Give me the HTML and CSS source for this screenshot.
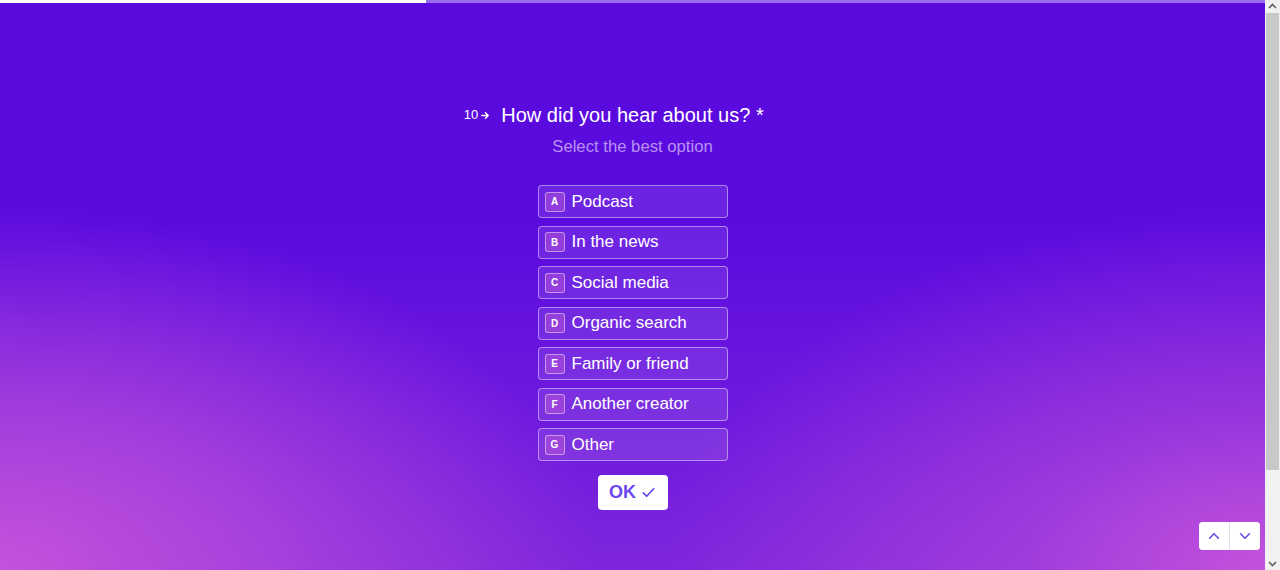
FILE: index.html
```html
<!DOCTYPE html>
<html lang="en">
<head>
<meta charset="utf-8">
<title>How did you hear about us?</title>
<link rel="stylesheet" href="styles.css">
</head>
<body>
<div class="page">
  <main class="stage">
    <div class="progress"><div class="progress-fill" style="width:426px"></div></div>
    <section class="question">
      <h1 class="title">
        <span class="qnum">10<svg class="qarrow" viewBox="0 0 10 10" width="9" height="9"><path d="M1 5h7M5 2l3 3-3 3" fill="none" stroke="#fff" stroke-width="1.6" stroke-linecap="round" stroke-linejoin="round"/></svg></span>
        How did you hear about us? *
      </h1>
      <p class="subtitle">Select the best option</p>
      <ul class="choices">
        <li class="choice"><span class="key">A</span><span class="label">Podcast</span></li>
        <li class="choice"><span class="key">B</span><span class="label">In the news</span></li>
        <li class="choice"><span class="key">C</span><span class="label">Social media</span></li>
        <li class="choice"><span class="key">D</span><span class="label">Organic search</span></li>
        <li class="choice"><span class="key">E</span><span class="label">Family or friend</span></li>
        <li class="choice"><span class="key">F</span><span class="label">Another creator</span></li>
        <li class="choice"><span class="key">G</span><span class="label">Other</span></li>
      </ul>
      <button class="ok">OK<svg viewBox="0 0 16 16" width="15" height="15"><path d="M2.5 8.5l3.5 3.5 7.5-8" fill="none" stroke="#6b47ee" stroke-width="1.8" stroke-linecap="round" stroke-linejoin="round"/></svg></button>
    </section>
    <nav class="pager">
      <button class="pbtn"><svg viewBox="0 0 16 16" width="14" height="14"><path d="M3 10.5l5-5 5 5" fill="none" stroke="#6b47ee" stroke-width="1.8" stroke-linecap="round" stroke-linejoin="round"/></svg></button>
      <button class="pbtn"><svg viewBox="0 0 16 16" width="14" height="14"><path d="M3 5.5l5 5 5-5" fill="none" stroke="#6b47ee" stroke-width="1.8" stroke-linecap="round" stroke-linejoin="round"/></svg></button>
    </nav>
  </main>
  <aside class="scrollbar">
    <div class="sb-arrow"><svg viewBox="0 0 15 13" width="15" height="13"><path d="M4 8l3.5-3.5L11 8" fill="none" stroke="#606060" stroke-width="1.6"/></svg></div>
    <div class="sb-track"><div class="sb-thumb"></div></div>
    <div class="sb-arrow"><svg viewBox="0 0 15 13" width="15" height="13"><path d="M4 5l3.5 3.5L11 5" fill="none" stroke="#606060" stroke-width="1.6"/></svg></div>
  </aside>
</div>
</body>
</html>
```
FILE: styles.css
```css
html, body {
  margin: 0;
  padding: 0;
  overflow: hidden;
}
body {
  font-family: "Liberation Sans", Arial, sans-serif;
  color: #fff;
  background-color: #5b0ade;
}
.page {
  display: flex;
  height: 570px;
}
.stage {
  position: relative;
  flex: 1;
  height: 570px;
  background:
    radial-gradient(ellipse 600px 360px at 0% 100%, #c452dc 0%, rgba(196,82,220,0.6) 45%, rgba(196,82,220,0) 100%),
    radial-gradient(ellipse 600px 360px at 100% 100%, #c452dc 0%, rgba(196,82,220,0.5) 40%, rgba(196,82,220,0) 100%),
    linear-gradient(180deg, #5b0ade 0%, #5c0bdf 40%, #7d26dc 100%);
  display: flex;
  flex-direction: column;
  align-items: center;
}
.progress {
  align-self: stretch;
  height: 3px;
  background: #9a6cf0;
}
.progress-fill {
  height: 3px;
  background: #fff;
}
.question {
  display: flex;
  flex-direction: column;
  align-items: center;
  padding-top: 100px;
}
.title {
  position: relative;
  margin: 0;
  font-size: 20px;
  font-weight: 400;
  line-height: 24px;
}
.qnum {
  position: absolute;
  right: 100%;
  top: 1px;
  margin-right: 11px;
  font-size: 13px;
  line-height: 22px;
  white-space: nowrap;
  display: flex;
  align-items: center;
  gap: 3px;
}
.subtitle {
  margin: 10px 0 0;
  font-size: 16.7px;
  line-height: 20px;
  color: #b892f2;
}
.choices {
  list-style: none;
  margin: 28px 0 0;
  padding: 0;
  display: flex;
  flex-direction: column;
  gap: 7.5px;
}
.choice {
  box-sizing: border-box;
  width: 190px;
  height: 33px;
  display: flex;
  align-items: center;
  gap: 7px;
  padding: 0 6px;
  border: 1px solid rgba(255,255,255,0.45);
  border-radius: 4px;
  background: rgba(255,255,255,0.1);
}
.key {
  box-sizing: border-box;
  width: 20px;
  height: 20px;
  display: flex;
  align-items: center;
  justify-content: center;
  border: 1px solid rgba(255,255,255,0.45);
  border-radius: 3px;
  background: rgba(190,90,215,0.45);
  font-size: 10px;
  font-weight: 700;
}
.label {
  font-size: 17px;
  line-height: 20px;
}
.ok {
  margin-top: 14px;
  width: 70px;
  height: 35px;
  border: 0;
  border-radius: 4px;
  background: #fff;
  color: #6b47ee;
  font-family: "Liberation Sans", Arial, sans-serif;
  font-size: 18px;
  font-weight: 700;
  display: flex;
  align-items: center;
  justify-content: center;
  gap: 5px;
  padding: 0;
}
.pager {
  position: absolute;
  right: 5px;
  bottom: 20px;
  display: flex;
  gap: 1px;
  background: #e2dcee;
  border-radius: 4px;
  overflow: hidden;
}
.pbtn {
  width: 30px;
  height: 28px;
  border: 0;
  padding: 0;
  background: #fff;
  display: flex;
  align-items: center;
  justify-content: center;
}
.scrollbar {
  width: 15px;
  flex: none;
  background: #f1f1f1;
  display: flex;
  flex-direction: column;
}
.sb-arrow {
  height: 13px;
  display: flex;
  align-items: center;
  justify-content: center;
}
.sb-track {
  flex: 1;
  display: flex;
  flex-direction: column;
  padding: 0 1px;
}
.sb-thumb {
  height: 457px;
  background: #c8c8c8;
}
```
